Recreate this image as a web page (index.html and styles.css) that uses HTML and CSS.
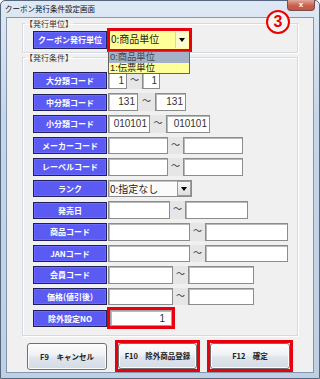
FILE: index.html
```html
<!DOCTYPE html>
<html lang="ja">
<head>
<meta charset="utf-8">
<title>クーポン発行条件設定画面</title>
<link rel="stylesheet" href="styles.css">
</head>
<body>
<div class="window">
  <div class="titlebar">
    <span class="title">クーポン発行条件設定画面</span>
    <span class="close">x</span>
  </div>
  <div class="client">
    <fieldset class="group g1">
      <legend>【発行単位】</legend>
      <div class="row">
        <div class="lbl">クーポン発行単位</div>
        <div class="redframe combo-frame">
          <div class="combo yellow"><span class="ctext">0:商品単位</span><span class="cbtn ybtn"><i class="tri"></i></span></div>
        </div>
      </div>
    </fieldset>
    <fieldset class="group g2">
      <legend>【発行条件】</legend>
      <div class="rows">
        <div class="row"><div class="lbl">大分類コード</div><div class="fields"><div class="in w19">1</div><div class="tl w15">〜</div><div class="in w18">1</div></div></div>
        <div class="row"><div class="lbl">中分類コード</div><div class="fields"><div class="in w30">131</div><div class="tl w17">〜</div><div class="in w31">131</div></div></div>
        <div class="row"><div class="lbl">小分類コード</div><div class="fields"><div class="in w42">010101</div><div class="tl w16">〜</div><div class="in w44">010101</div></div></div>
        <div class="row"><div class="lbl">メーカーコード</div><div class="fields"><div class="in w60"></div><div class="tl w15">〜</div><div class="in w60"></div></div></div>
        <div class="row"><div class="lbl">レーベルコード</div><div class="fields"><div class="in w60"></div><div class="tl w15">〜</div><div class="in w60"></div></div></div>
        <div class="row"><div class="lbl">ランク</div><div class="fields"><div class="combo rank"><span class="ctext">0:指定なし</span><span class="cbtn gbtn"><i class="tri"></i></span></div></div></div>
        <div class="row"><div class="lbl">発売日</div><div class="fields"><div class="in w62"></div><div class="tl w15">〜</div><div class="in w63"></div></div></div>
        <div class="row"><div class="lbl">商品コード</div><div class="fields"><div class="in w82"></div><div class="tl w15">〜</div><div class="in w83"></div></div></div>
        <div class="row"><div class="lbl">JANコード</div><div class="fields"><div class="in w82"></div><div class="tl w15">〜</div><div class="in w83"></div></div></div>
        <div class="row"><div class="lbl">会員コード</div><div class="fields"><div class="in w65"></div><div class="tl w15">〜</div><div class="in w66"></div></div></div>
        <div class="row"><div class="lbl">価格(値引後)</div><div class="fields"><div class="in w65"></div><div class="tl w15">〜</div><div class="in w66"></div></div></div>
        <div class="row"><div class="lbl">除外設定NO</div><div class="redframe no-frame"><div class="in noin">1</div></div></div>
      </div>
    </fieldset>
    <div class="buttons">
      <div class="btn">F9　キャンセル</div>
      <div class="redframe btn-frame"><div class="btn">F10　除外商品登録</div></div>
      <div class="redframe btn-frame wide"><div class="btn">F12　確定</div></div>
    </div>
  </div>
  <div class="droplist">
    <div class="item sel">0:商品単位</div>
    <div class="item">1:伝票単位</div>
  </div>
  <div class="badge">3</div>
</div>
</body>
</html>
```
FILE: styles.css
```css
* { box-sizing: border-box; }
html, body { margin: 0; padding: 0; }
body {
  width: 320px;
  height: 379px;
  overflow: hidden;
  background: #ffffff;
  font-family: "Noto Sans CJK JP", "Noto Sans", sans-serif;
  color: #222;
}
.window {
  position: relative;
  width: 320px;
  height: 379px;
  border: 1px solid #56677d;
  border-radius: 5px 5px 0 0;
  background: linear-gradient(#dfe9f5, #c6d6e9 30%, #bfd0e4);
  padding: 0 5px 5px 5px;
  display: flex;
  flex-direction: column;
}
.titlebar {
  height: 16px;
  margin: 0 -5px;
  padding-left: 4px;
  display: flex;
  align-items: center;
}
.title {
  font-size: 7.5px;
  line-height: 8px;
  color: #111;
  white-space: nowrap;
}
.close {
  margin-left: auto;
  margin-right: 4px;
  align-self: flex-start;
  margin-top: -1px;
  width: 28px;
  height: 11px;
  border: 1px solid #7d4a44;
  border-top: none;
  border-radius: 0 0 4px 4px;
  background: linear-gradient(#e2a99d, #c9614f 55%, #c2563f);
  color: #fff;
  font-family: "Liberation Sans", sans-serif;
  font-weight: bold;
  font-size: 8px;
  line-height: 9px;
  text-align: center;
}
.client {
  flex: 1;
  background: #f0f0f0;
  border: 1px solid #8597ad;
  padding-left: 15px;
  display: flex;
  flex-direction: column;
}
.group {
  margin: 0;
  padding: 0;
  min-width: 0;
  width: 276px;
  border: 1px solid #d3dae1;
  box-shadow: inset 1px 1px 0 #ffffff, 1px 1px 0 #ffffff;
}
.group legend {
  padding: 0;
  margin-left: 2px;
  font-size: 8px;
  line-height: 8px;
  height: 8px;
  color: #333;
  white-space: nowrap;
}
.g1 { margin-top: 2px; }
.g2 {
  margin-top: 1px;
  padding-top: 10px;
  padding-bottom: 8px;
}
.row {
  display: flex;
  align-items: center;
  margin-left: 10px;
}
.g1 .row { height: 24px; }
.rows {
  display: grid;
  grid-template-rows: repeat(12, 17.6px);
  row-gap: 4px;
}
.rows .row { height: 17.6px; }
.lbl {
  flex: none;
  width: 74px;
  height: 17.4px;
  background: #5b5bf3;
  border: 1px solid #1f1f5e;
  box-shadow: inset 0 0 0 1px #6a6aff;
  color: #ffffff;
  font-weight: bold;
  font-size: 8px;
  line-height: 15px;
  text-align: center;
  white-space: nowrap;
}
.fields {
  display: flex;
  height: 100%;
  margin-left: 1px;
}
.in {
  height: 100%;
  background: #ffffff;
  border: 1px solid #8c8c8c;
  box-shadow: inset 1px 1px 0 #b9b9b9;
  font-family: "Liberation Sans", sans-serif;
  font-size: 10px;
  line-height: 15px;
  text-align: right;
  padding-right: 2px;
  color: #333;
}
.tl {
  height: 100%;
  background: #e6e6e6;
  font-size: 9px;
  line-height: 16px;
  text-align: center;
  color: #333;
}
.w15 { width: 15px; }
.w16 { width: 16px; }
.w17 { width: 17px; }
.w18 { width: 18px; }
.w19 { width: 19px; }
.w30 { width: 30px; }
.w31 { width: 31px; }
.w42 { width: 42px; }
.w44 { width: 44px; }
.w60 { width: 60px; }
.w62 { width: 62px; }
.w63 { width: 63px; }
.w65 { width: 65px; }
.w66 { width: 66px; }
.w82 { width: 82px; }
.w83 { width: 83px; }
.redframe {
  border: 3px solid #e8000e;
  flex: none;
}
.combo-frame {
  width: 85px;
  height: 24px;
}
.combo {
  display: flex;
  align-items: stretch;
  height: 100%;
  font-size: 10px;
  line-height: 16px;
}
.combo.yellow {
  background: #ffff99;
}
.ctext {
  flex: 1;
  padding-left: 1px;
  white-space: nowrap;
  overflow: hidden;
  color: #222;
}
.cbtn {
  flex: none;
  width: 13px;
  display: flex;
  align-items: center;
  justify-content: center;
}
.ybtn {
  background: #fbfbd0;
  border-left: 1px solid #d7d7a0;
  margin: 1px 1px 1px 0;
}
.gbtn {
  background: linear-gradient(#f7f7f7, #dedede);
  border: 1px solid #9b9b9b;
  width: 14px;
}
.tri {
  display: block;
  width: 0;
  height: 0;
  border-left: 3.5px solid transparent;
  border-right: 3.5px solid transparent;
  border-top: 4px solid #000;
}
.combo.rank {
  width: 84px;
  background: #fbfbfb;
  border: 1px solid #8c8c8c;
  box-shadow: inset 1px 1px 0 #c4c4c4;
  line-height: 15px;
}
.no-frame {
  width: 68px;
  height: 22px;
}
.noin {
  width: 100%;
  padding-right: 6px;
  border-color: #a0a0a0;
}
.buttons {
  display: flex;
  align-items: center;
  height: 32px;
  margin-top: 4px;
  margin-left: 5px;
}
.btn {
  width: 80px;
  height: 27px;
  border: 1px solid #707070;
  border-radius: 3px;
  background: linear-gradient(#fdfdfd, #eff1f4 45%, #e0e5ec 55%, #d3dbe5);
  box-shadow: inset 0 0 0 1px #fbfbfb;
  font-weight: bold;
  font-size: 7.5px;
  line-height: 25px;
  text-align: center;
  color: #222;
  white-space: nowrap;
}
.btn-frame {
  width: 85px;
  height: 32px;
  margin-left: 8px;
}
.btn-frame .btn {
  width: 100%;
  height: 100%;
  line-height: 24px;
}
.btn-frame.wide {
  width: 86px;
  margin-left: 7px;
}
.droplist {
  position: absolute;
  left: 107px;
  top: 50px;
  width: 82px;
  height: 23px;
  border: 1px solid #646464;
  background: #ffff99;
  font-family: "Liberation Sans", "Noto Sans CJK JP", sans-serif;
  font-size: 9.3px;
  line-height: 10.5px;
}
.item {
  height: 10.5px;
  padding-left: 1px;
  color: #222;
  white-space: nowrap;
}
.item.sel {
  background: #a3b2c7;
  color: #3c4450;
}
.badge {
  position: absolute;
  left: 265px;
  top: 9px;
  width: 24px;
  height: 24px;
  border: 2.5px solid #ee0000;
  border-radius: 50%;
  background: #f4f4f4;
  color: #ee0000;
  font-family: "Liberation Sans", sans-serif;
  font-weight: bold;
  font-size: 16px;
  line-height: 19px;
  text-align: center;
}
```
